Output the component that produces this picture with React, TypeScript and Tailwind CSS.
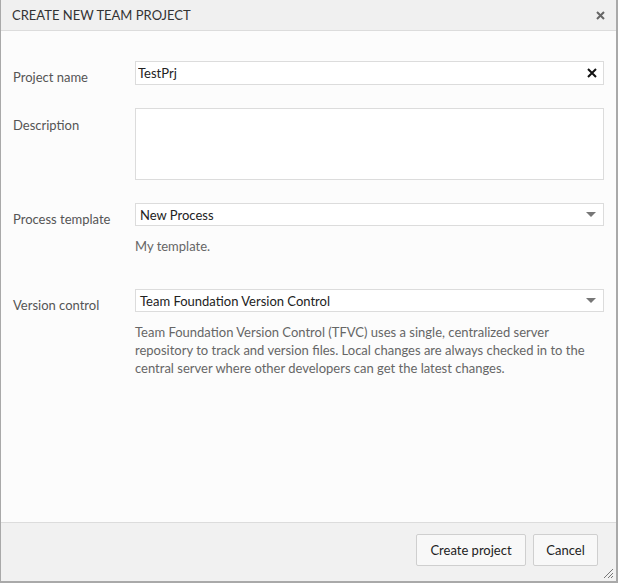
import React, { useState } from "react";

const font = { fontFamily: '"Segoe UI", Lato, "Open Sans", sans-serif' };

function Caret() {
  return (
    <svg width="10" height="6" viewBox="0 0 10 6" className="absolute right-[7px] top-[8px]">
      <path d="M0 0 L10 0 L5 5 Z" fill="#777" />
    </svg>
  );
}

export default function App() {
  const [name, setName] = useState("TestPrj");

  return (
    <div
      className="w-[618px] h-[583px] flex flex-col bg-[#a9a9a9] pl-px pr-[2px] pb-[2px] text-[13px] leading-[18px] text-[#222]"
      style={font}
    >
      {/* header */}
      <div className="h-[31px] flex items-center justify-between bg-[#f0f0f0] border-b border-[#dcdcdc] pl-[11px] pr-[11px]">
        <span className="text-[13px] text-[#333]">CREATE NEW TEAM PROJECT</span>
        <svg width="9" height="9" viewBox="0 0 9 9">
          <path d="M1 1 L8 8 M8 1 L1 8" stroke="#666" strokeWidth="2" />
        </svg>
      </div>

      {/* body */}
      <div className="flex-1 bg-[#fcfcfc] pt-[30px] pr-[12px]">
        <div className="grid grid-cols-[134px_1fr] gap-y-[23px]">
          <label className="h-[24px] pl-[12px] pt-[7px] text-[#555]">Project name</label>
          <div className="relative h-[24px] border border-[#dcdcdc] bg-white flex items-center pl-[2px]">
            <input
              value={name}
              onChange={(e) => setName(e.target.value)}
              className="w-full outline-none bg-transparent text-[#222] caret-black"
            />
            <svg width="10" height="10" viewBox="0 0 10 10" className="absolute right-[6px] top-[6px]">
              <path d="M1 1 L9 9 M9 1 L1 9" stroke="#111" strokeWidth="2" />
            </svg>
          </div>

          <label className="h-[24px] pl-[12px] pt-[8px] text-[#555]">Description</label>
          <div className="h-[72px] border border-[#dcdcdc] bg-white"></div>

          <label className="h-[24px] pl-[12px] pt-[7px] text-[#555]">Process template</label>
          <div>
            <div className="relative h-[23px] border border-[#dcdcdc] bg-white flex items-center pl-[4px]">
              New Process
              <Caret />
            </div>
            <p className="mt-[11px] text-[#666]">My template.</p>
          </div>

          <label className="h-[24px] pl-[12px] pt-[18px] text-[#555]">Version control</label>
          <div className="pt-[11px]">
            <div className="relative h-[23px] border border-[#dcdcdc] bg-white flex items-center pl-[4px]">
              Team Foundation Version Control
              <Caret />
            </div>
            <p className="mt-[11px] text-[#666] pr-[4px]">
              Team Foundation Version Control (TFVC) uses a single, centralized server repository to track and
              version files. Local changes are always checked in to the central server where other developers can
              get the latest changes.
            </p>
          </div>
        </div>
      </div>

      {/* footer */}
      <div className="relative h-[59px] bg-[#f1f1f1] border-t border-[#dcdcdc] flex justify-end items-start pt-[11px] pr-[18px] gap-[7px]">
        <button className="h-[32px] w-[110px] border border-[#cfcfcf] bg-[#f8f8f8] rounded-[2px] text-[#222]">
          Create project
        </button>
        <button className="h-[32px] w-[65px] border border-[#cfcfcf] bg-[#f8f8f8] rounded-[2px] text-[#222]">
          Cancel
        </button>
        <svg width="12" height="12" viewBox="0 0 12 12" className="absolute right-[2px] bottom-[2px]">
          <path d="M11 2 L2 11 M11 6 L6 11 M11 9 L9 11" stroke="#777" strokeWidth="1" />
        </svg>
      </div>
    </div>
  );
}
